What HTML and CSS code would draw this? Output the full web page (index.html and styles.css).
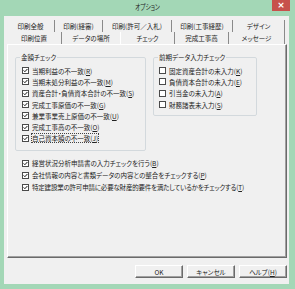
FILE: index.html
```html
<!DOCTYPE html>
<html lang="ja">
<head>
    <meta charset="UTF-8">
    <title>オプション</title>
    <link rel="stylesheet" href="styles.css">
</head>
<body>
    <div class="window">
        <div class="titlebar">
            <span></span>
            <span class="title">オプション</span>
            <span class="close-wrap"><span class="close">&times;</span></span>
        </div>

        <div class="client">
            <div class="tabrow">
                <div class="tab w48">印刷全般</div>
                <div class="tab w48">印刷(経審)</div>
                <div class="tab w69">印刷(許可／入札)</div>
                <div class="tab w61">印刷(工事経歴)</div>
                <div class="tab w52">デザイン</div>
            </div>
            <div class="tabrow">
                <div class="tab w55">印刷位置</div>
                <div class="tab w58 before-active">データの場所</div>
                <div class="tab w55 active">チェック</div>
                <div class="tab w54">完成工事高</div>
                <div class="tab w56">メッセージ</div>
            </div>

            <div class="panel">
                <div class="groups">
                    <fieldset class="group group-amount">
                        <legend>金額チェック</legend>
                        <div class="group-body">
                            <div class="row"><span class="box checked"></span><span>当期利益の不一致(<u>R</u>)</span></div>
                            <div class="row"><span class="box checked"></span><span>当期未処分利益の不一致(<u>M</u>)</span></div>
                            <div class="row"><span class="box checked"></span><span>資産合計・負債資本合計の不一致(<u>S</u>)</span></div>
                            <div class="row"><span class="box checked"></span><span>完成工事原価の不一致(<u>G</u>)</span></div>
                            <div class="row"><span class="box checked"></span><span>兼業事業売上原価の不一致(<u>U</u>)</span></div>
                            <div class="row"><span class="box checked"></span><span>完成工事高の不一致(<u>O</u>)</span></div>
                            <div class="row"><span class="box checked"></span><span class="focus">自己資本額の不一致(<u>J</u>)</span></div>
                        </div>
                    </fieldset>

                    <fieldset class="group group-prev">
                        <legend>前期データ入力チェック</legend>
                        <div class="group-body">
                            <div class="row"><span class="box"></span><span>固定資産合計の未入力(<u>K</u>)</span></div>
                            <div class="row"><span class="box"></span><span>負債資本合計の未入力(<u>E</u>)</span></div>
                            <div class="row"><span class="box"></span><span>引当金の未入力(<u>A</u>)</span></div>
                            <div class="row"><span class="box"></span><span>財務諸表未入力(<u>S</u>)</span></div>
                        </div>
                    </fieldset>
                </div>

                <div class="extra">
                    <div class="row wide"><span class="box checked"></span><span>経営状況分析申請書の入力チェックを行う(<u>B</u>)</span></div>
                    <div class="row wide"><span class="box checked"></span><span>会社情報の内容と書類データの内容との整合をチェックする(<u>P</u>)</span></div>
                    <div class="row wide"><span class="box checked"></span><span class="tight">特定建設業の許可申請に必要な財産的要件を満たしているかをチェックする(<u>T</u>)</span></div>
                </div>
            </div>

            <div class="buttons">
                <button class="btn">OK</button>
                <button class="btn">キャンセル</button>
                <button class="btn">ヘルプ(<u>H</u>)</button>
            </div>
        </div>
    </div>
</body>
</html>
```

FILE: styles.css
```css
body {
    margin: 0;
    width: 295px;
    height: 289px;
    overflow: hidden;
    background-color: #a3d7b6;
    font-family: "Noto Sans CJK JP", sans-serif;
    font-size: 6.5px;
    font-feature-settings: "palt";
    color: #222;
}
.window {
    display: flex;
    flex-direction: column;
    height: 289px;
}
.titlebar {
    height: 16px;
    display: grid;
    grid-template-columns: 1fr auto 1fr;
    align-items: start;
}
.title {
    display: inline-block;
    font-size: 7.5px;
    line-height: 8px;
    margin-top: 3px;
    transform: scaleX(0.75);
    color: #222;
}
.close-wrap {
    display: flex;
    justify-content: flex-end;
    padding-right: 5px;
}
.close {
    width: 18px;
    height: 11px;
    background-color: #c7514c;
    color: #fff;
    font-family: "DejaVu Sans", sans-serif;
    font-size: 9px;
    font-weight: bold;
    line-height: 10px;
    text-align: center;
}
.client {
    flex: 1;
    margin: 0 6px 5px 4px;
    padding: 4px 2px 0 3px;
    background-color: #f0f0f0;
    display: flex;
    flex-direction: column;
}
.tabrow {
    display: flex;
    height: 12px;
}
.tab {
    box-sizing: border-box;
    display: flex;
    align-items: center;
    justify-content: center;
    border-right: 1px solid #8a8a8a;
    line-height: 8px;
    white-space: nowrap;
}
.tab.before-active {
    border-right: none;
}
.tab.active {
    border-left: 1px solid #fff;
}
.w48 { width: 48px; }
.w52 { width: 52px; }
.w54 { width: 54px; }
.w55 { width: 55px; }
.w56 { width: 56px; }
.w58 { width: 58px; }
.w61 { width: 61px; }
.w69 { width: 69px; }
.panel {
    box-sizing: border-box;
    height: 214px;
    border-left: 1px solid #fff;
    border-top: 1px solid #fff;
    border-right: 1px solid #6a6a6a;
    border-bottom: 1px solid #6a6a6a;
    box-shadow: inset -1px -1px 0 #a0a0a0;
    padding: 8px 0 0 7px;
}
.groups {
    display: flex;
    align-items: flex-start;
    gap: 7px;
}
.group {
    margin: 0;
    padding: 0;
    border: 1px solid #d3d9dd;
    border-radius: 2px;
    box-sizing: border-box;
}
.group legend {
    margin-left: 4px;
    padding: 0 1px;
    line-height: 8px;
}
.group-amount {
    width: 131px;
}
.group-prev {
    width: 104px;
}
.group-body {
    padding: 4px 0 6px 6px;
}
.group-prev .group-body {
    padding: 4px 0 5px 5px;
}
.row {
    display: flex;
    align-items: center;
    gap: 3px;
    height: 11.3px;
    line-height: 8px;
    white-space: nowrap;
}
.box {
    box-sizing: border-box;
    width: 7px;
    height: 7px;
    border: 1px solid #4a4a4a;
    background-color: #fff;
    flex-shrink: 0;
}
.box.checked {
    background: #fff url("data:image/svg+xml;utf8,<svg xmlns='http://www.w3.org/2000/svg' viewBox='0 0 5 5'><path d='M0.6 2.4 L1.9 3.7 L4.4 1' fill='none' stroke='%23111' stroke-width='1'/></svg>") no-repeat center / 5px 5px;
}
.focus {
    display: block;
    height: 10px;
    box-sizing: border-box;
    line-height: 8px;
    margin-left: -1px;
    border: 1px dotted #444;
}
.tight {
    letter-spacing: -0.2px;
}
.extra {
    margin-top: 6px;
    padding-left: 7px;
}
.row.wide {
    height: 12px;
}
.buttons {
    display: flex;
    justify-content: flex-end;
    gap: 4px;
    margin-top: 7px;
}
.btn {
    box-sizing: border-box;
    width: 48px;
    height: 13px;
    padding: 0;
    font-family: "Noto Sans CJK JP", sans-serif;
    font-size: 6.5px;
    font-feature-settings: "palt";
    color: #222;
    background-color: #f0f0f0;
    border-top: 1px solid #fff;
    border-left: 1px solid #fff;
    border-right: 1px solid #6a6a6a;
    border-bottom: 1px solid #6a6a6a;
    box-shadow: inset -1px -1px 0 #a0a0a0;
}
```
